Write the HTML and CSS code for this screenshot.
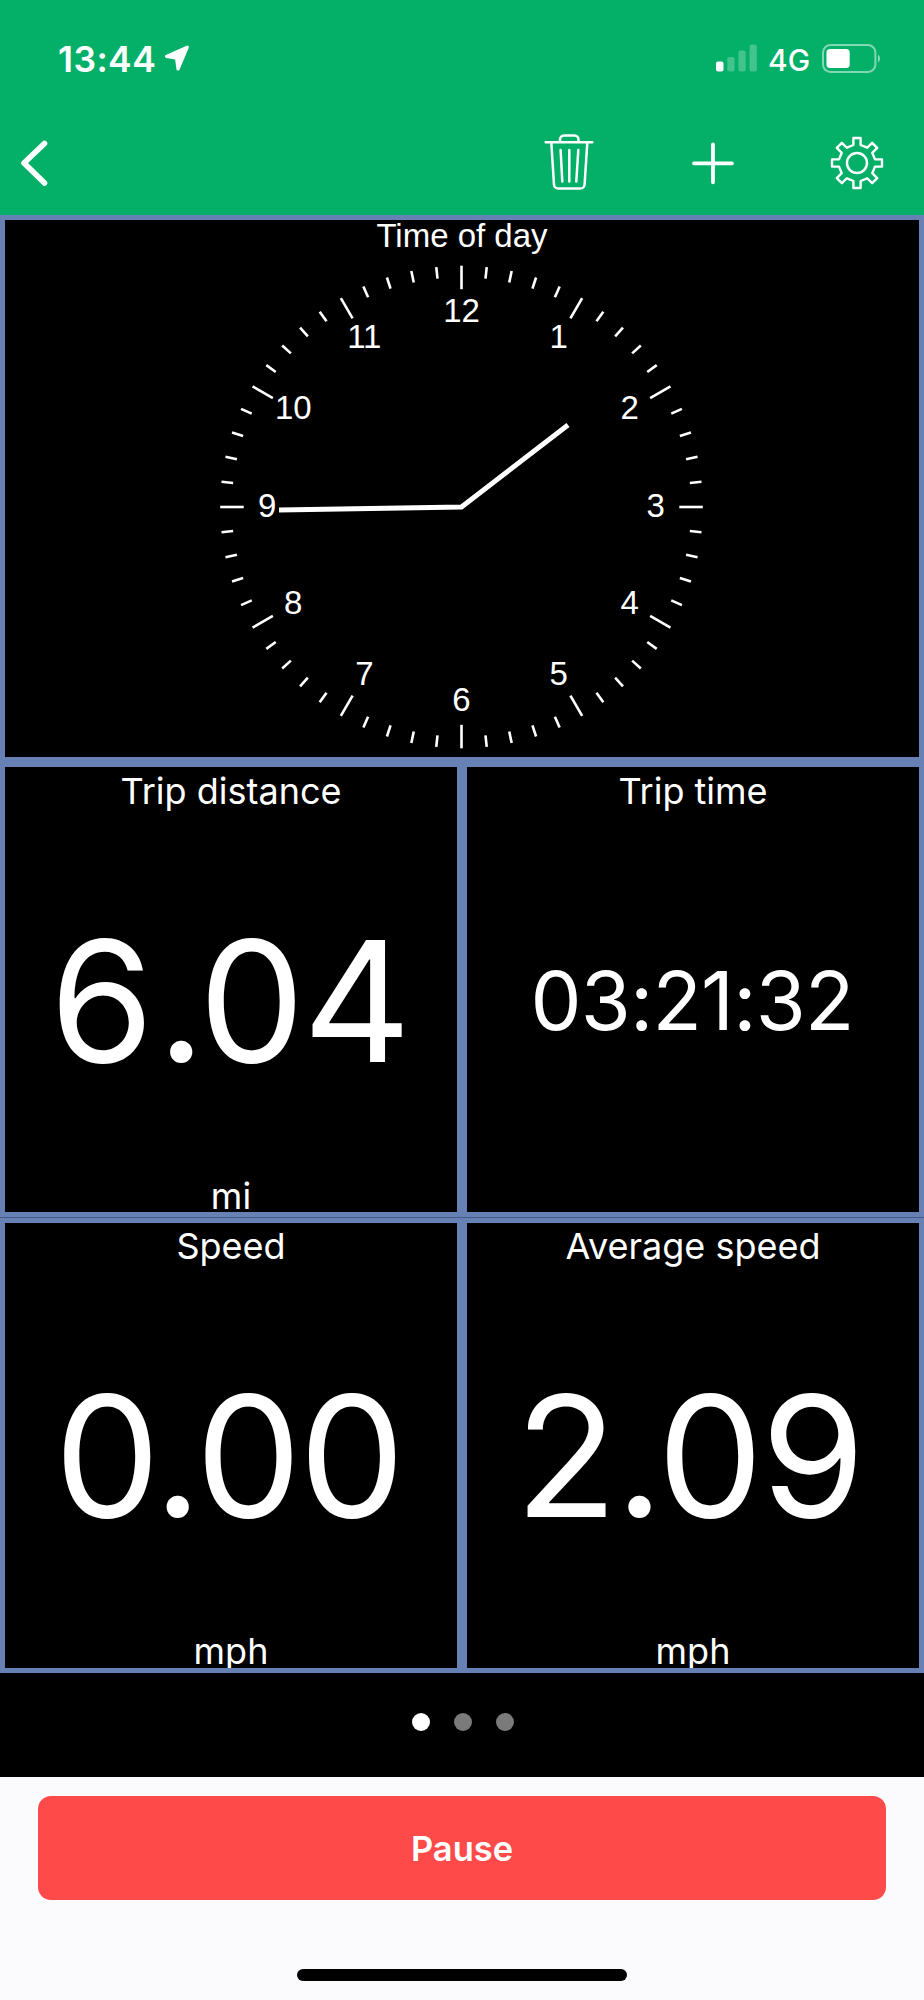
FILE: index.html
```
<!DOCTYPE html>
<html lang="en">
<head>
    <meta charset="UTF-8">
    <meta name="viewport" content="width=device-width, initial-scale=1.0">
    <title>Trip computer</title>
    <link rel="stylesheet" href="styles.css">
</head>
<body>
    <header class="top">
        <div class="status">
            <span class="time">13:44</span>
            <svg class="loc" width="26" height="28" viewBox="0 0 26 28"><path d="M23.3 3.2 L2.5 12.4 L12.6 14.2 L14 25 Z" fill="#fff" stroke="#fff" stroke-width="3.2" stroke-linejoin="round"/></svg>
            <svg class="signal" width="42" height="28" viewBox="0 0 42 28" fill="#fff">
                <rect x="0" y="17.5" width="7.5" height="10" rx="2"/>
                <rect x="11.3" y="13" width="7.3" height="14.5" rx="2" opacity=".25"/>
                <rect x="22.4" y="6.5" width="7.3" height="21" rx="2" opacity=".25"/>
                <rect x="33.5" y="0.5" width="7.3" height="27" rx="2" opacity=".25"/>
            </svg>
            <span class="net">4G</span>
            <svg class="battery" width="60" height="30" viewBox="0 0 60 30">
                <rect x="1" y="1" width="52.4" height="27" rx="7.5" fill="none" stroke="#fff" stroke-width="2" opacity=".5"/>
                <rect x="4.5" y="5" width="23.2" height="19" rx="3.5" fill="#fff"/>
                <path d="M56 10.5 a5 5 0 0 1 0 8 z" fill="#fff" opacity=".55"/>
            </svg>
        </div>
        <nav class="nav">
            <svg class="back" width="34" height="52" viewBox="0 0 34 52"><path d="M29.5 6.5 L9 26 L29.5 46" fill="none" stroke="#fff" stroke-width="5.6" stroke-linecap="round" stroke-linejoin="round"/></svg>
            <svg class="trash" width="52" height="60" viewBox="0 0 52 60" fill="none" stroke="#fff" stroke-width="2.5" stroke-linecap="round" stroke-linejoin="round">
                <path d="M2.7 9.3 H49.3 M17 9 V6.5 a4 4 0 0 1 4 -4 H31.5 a4 4 0 0 1 4 4 V9"/>
                <path d="M8.3 9.5 L11 51.5 a4.3 4.3 0 0 0 4.3 4 H37.3 a4.3 4.3 0 0 0 4.3 -4 L44.3 9.5"/>
                <path d="M17.6 17 L19.3 48.5 M26.3 17 V48.5 M35.3 17 L33.3 48.5"/>
            </svg>
            <svg class="plus" width="44" height="44" viewBox="0 0 44 44"><path d="M22 3.3 V41.3 M3 22.3 H41" stroke="#fff" stroke-width="3.8" stroke-linecap="round"/></svg>
            <svg class="gear" width="56" height="56" viewBox="-28 -28 56 56" fill="none" stroke="#fff" stroke-width="2.4" stroke-linejoin="round">
                <path id="teeth"/>
                <circle r="10"/>
            </svg>
        </nav>
    </header>

    <main class="grid">
        <section class="cell wide">
            <h2>Time of day</h2>
            <svg class="clock" id="clock" width="500" height="500" viewBox="-249.5 -250 500 500">
                <path class="hand" d="M106.5 -82 L0 0 L-182.5 3"/>
            </svg>
        </section>
        <section class="cell">
            <h3>Trip distance</h3>
            <div class="val v604">6<span>.</span>04</div>
            <div class="unit">mi</div>
        </section>
        <section class="cell">
            <h3>Trip time</h3>
            <div class="val small">03:21:32</div>
        </section>
        <section class="cell low">
            <h3>Speed</h3>
            <div class="val v000">0.00</div>
            <div class="unit">mph</div>
        </section>
        <section class="cell low">
            <h3>Average speed</h3>
            <div class="val v209">2.09</div>
            <div class="unit">mph</div>
        </section>
    </main>

    <div class="dots">
        <span class="dot on"></span>
        <span class="dot"></span>
        <span class="dot"></span>
    </div>

    <footer class="bottom">
        <button class="pause">Pause</button>
        <div class="home"></div>
    </footer>

    <script>
        const ns = 'http://www.w3.org/2000/svg';
        const clock = document.getElementById('clock');

        // minute and hour marks
        for (let i = 0; i < 60; i++) {
            const l = document.createElementNS(ns, 'line');
            l.setAttribute('y1', -241.3);
            l.setAttribute('y2', i % 5 === 0 ? -217.8 : -229.6);
            l.setAttribute('transform', `rotate(${i * 6})`);
            clock.appendChild(l);
        }

        for (let h = 1; h <= 12; h++) {
            const t = document.createElementNS(ns, 'text');
            const ang = h * Math.PI / 6;
            t.setAttribute('x', 194.3 * Math.sin(ang));
            t.setAttribute('y', 9.6 - 194.3 * Math.cos(ang));
            t.textContent = h;
            clock.appendChild(t);
        }

        // gear outline, one tooth every 45 degrees
        const tooth = [[-3.6, -18], [-3.6, -25], [3.6, -25], [3.6, -18]];
        let d = '';
        for (let k = 0; k < 8; k++) {
            const a = k * Math.PI / 4;
            tooth.forEach(([x, y]) => {
                const px = x * Math.cos(a) - y * Math.sin(a);
                const py = x * Math.sin(a) + y * Math.cos(a);
                d += (d ? 'L' : 'M') + px.toFixed(2) + ' ' + py.toFixed(2);
            });
        }
        document.getElementById('teeth').setAttribute('d', d + 'Z');
    </script>
</body>
</html>
```
FILE: styles.css
```
* {
    box-sizing: border-box;
}

body {
    margin: 0;
    width: 924px;
    height: 2000px;
    background: #000;
    color: #fff;
    font-family: Inter, "Liberation Sans", sans-serif;
    overflow: hidden;
}

svg {
    display: block;
    flex: none;
}

.top {
    height: 215px;
    background: #04af68;
}

.status {
    display: flex;
    height: 118px;
    padding: 44px 0 0 58px;
    align-items: flex-start;
}

.time {
    width: 106px;
    font-size: 35.5px;
    font-weight: 600;
    line-height: 32px;
    letter-spacing: 0.4px;
}

.signal {
    margin-left: 526px;
}

.net {
    width: 54px;
    margin-left: 10px;
    font-size: 30px;
    font-weight: 500;
    line-height: 32px;
}

.nav {
    display: flex;
    height: 90px;
    align-items: center;
    padding-left: 15px;
}

.trash {
    margin-left: 494px;
}

.plus {
    margin-left: 96px;
}

.gear {
    margin-left: 94px;
}

.grid {
    display: grid;
    grid-template-columns: 462px 462px;
    grid-template-rows: 547px 455px 456px;
    background: #435b8a;
}

.cell {
    display: flex;
    flex-direction: column;
    align-items: center;
    border: 5px solid #6781b5;
    background: #000;
    overflow: hidden;
}

.wide {
    grid-column: span 2;
}

.low {
    margin-top: 1px;
}

h2 {
    margin: 0;
    height: 37.5px;
    font-family: "Liberation Sans", Arial, sans-serif;
    font-size: 33px;
    font-weight: 400;
    line-height: 31px;
}

h3 {
    margin: 0;
    height: 111px;
    font-size: 36px;
    font-weight: 400;
    line-height: 48px;
    flex: none;
}

.low h3 {
    height: 110px;
    line-height: 47px;
}

.clock line {
    stroke: #fff;
    stroke-width: 2.6;
}

.clock text {
    fill: #fff;
    font-family: "Liberation Sans", Arial, sans-serif;
    font-size: 33px;
    text-anchor: middle;
}

.hand {
    fill: none;
    stroke: #fff;
    stroke-width: 5;
}

.val {
    height: 246px;
    font-size: 168px;
    line-height: 246px;
    white-space: nowrap;
    flex: none;
}

.v604 {
    margin-left: -3px;
    letter-spacing: -2px;
}

.v604 span {
    margin: 0 -4.5px 0 5px;
}

.v000 {
    margin-left: -5px;
    letter-spacing: -2.3px;
}

.v209 {
    margin-left: -8px;
    letter-spacing: -2.2px;
}

.small {
    margin-left: -2px;
    font-size: 81px;
    letter-spacing: -0.8px;
    line-height: 247px;
}

.unit {
    margin-top: 50px;
    font-size: 36px;
    line-height: 44px;
    flex: none;
}

.dots {
    display: flex;
    height: 104px;
    padding: 39.5px 0 0 412px;
    gap: 24px;
}

.dot {
    width: 18px;
    height: 18px;
    border-radius: 50%;
    background: #7a7a7a;
}

.on {
    background: #fff;
}

.bottom {
    display: flex;
    flex-direction: column;
    align-items: center;
    height: 223px;
    padding-top: 19px;
    background: #fbfbfd;
}

.pause {
    width: 848px;
    height: 104px;
    border: none;
    border-radius: 13px;
    background: #ff4a4a;
    color: #fff;
    font-family: inherit;
    font-size: 34.5px;
    font-weight: 600;
}

.home {
    width: 330px;
    height: 12px;
    margin-top: 69px;
    border-radius: 6px;
    background: #000;
}
```
